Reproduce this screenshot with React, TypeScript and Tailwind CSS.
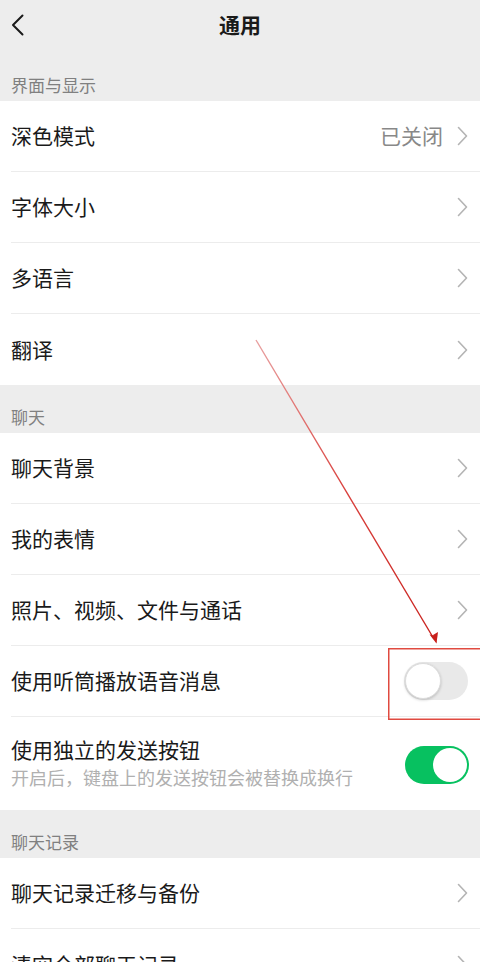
import React from "react";

const FONT = { fontFamily: '"Noto Sans CJK SC", "Noto Sans", sans-serif' };

function Chevron() {
  return (
    <svg width="11" height="20" viewBox="0 0 11 20" className="shrink-0">
      <path d="M1.5 1.5 L9.5 10 L1.5 18.5" fill="none" stroke="#b4b4b4" strokeWidth="1.6" strokeLinecap="round" strokeLinejoin="round" />
    </svg>
  );
}

function Toggle({ on }: { on: boolean }) {
  return on ? (
    <div className="w-[64px] h-[38px] rounded-full bg-[#07c160] flex items-center justify-end p-[2px] shrink-0">
      <div className="w-[34px] h-[34px] rounded-full bg-white" />
    </div>
  ) : (
    <div className="w-[64px] h-[38px] rounded-full bg-[#e9e9e9] flex items-center justify-start p-[1px] shrink-0">
      <div className="w-[36px] h-[36px] rounded-full bg-white border border-[#dcdcdc] shadow-[0_1px_3px_rgba(0,0,0,0.2)]" />
    </div>
  );
}

function Section({ label, h }: { label: string; h: string }) {
  return (
    <div className={`${h} bg-[#ededed] flex items-end pl-[11px] pb-[4px]`}>
      <span className="text-[17px] leading-[24px] text-[#808080]">{label}</span>
    </div>
  );
}

function Row({
  title,
  value,
  last,
  right,
}: {
  title: string;
  value?: string;
  last?: boolean;
  right?: React.ReactNode;
}) {
  return (
    <div className="bg-white pl-[11px]">
      <div className={`h-[71px] flex items-center pr-[12px] ${last ? "" : "border-b border-[#ececec]"}`}>
        <span className="flex-1 text-[21px] text-[#1a1a1a]">{title}</span>
        {value && <span className="text-[21px] text-[#888888] mr-[14px]">{value}</span>}
        {right ?? <Chevron />}
      </div>
    </div>
  );
}

export default function App() {
  return (
    <div className="relative w-[480px] h-[962px] overflow-hidden bg-[#ededed]" style={FONT}>
      {/* Header */}
      <div className="h-[50px] relative flex items-center justify-center">
        <div className="absolute left-[11px] top-[14px]">
          <svg width="14" height="22" viewBox="0 0 14 22">
            <path d="M11.5 1.5 L2 11 L11.5 20.5" fill="none" stroke="#1a1a1a" strokeWidth="2" strokeLinecap="round" strokeLinejoin="round" />
          </svg>
        </div>
        <span className="text-[21px] font-semibold text-[#1a1a1a]">通用</span>
      </div>

      <Section label="界面与显示" h="h-[51px]" />
      <Row title="深色模式" value="已关闭" />
      <Row title="字体大小" />
      <Row title="多语言" />
      <Row title="翻译" last />

      <Section label="聊天" h="h-[48px]" />
      <Row title="聊天背景" />
      <Row title="我的表情" />
      <Row title="照片、视频、文件与通话" />
      <Row title="使用听筒播放语音消息" right={<Toggle on={false} />} />
      <div className="bg-white pl-[11px]">
        <div className="h-[93px] flex items-center pr-[11px]">
          <div className="flex-1 flex flex-col pb-[4px]">
            <span className="text-[21px] leading-[30px] text-[#1a1a1a]">使用独立的发送按钮</span>
            <span className="text-[18px] leading-[26px] text-[#b0b0b0]">开启后，键盘上的发送按钮会被替换成换行</span>
          </div>
          <div className="mt-[2px]">
            <Toggle on />
          </div>
        </div>
      </div>

      <Section label="聊天记录" h="h-[48px]" />
      <Row title="聊天记录迁移与备份" />
      <Row title="清空全部聊天记录" last />

      {/* Annotation overlay */}
      <svg className="absolute inset-0 pointer-events-none" width="480" height="962" viewBox="0 0 480 962">
        <defs>
          <linearGradient id="ln" x1="256" y1="340" x2="436" y2="643" gradientUnits="userSpaceOnUse">
            <stop offset="0" stopColor="#e8a0a0" />
            <stop offset="0.5" stopColor="#d9403c" />
            <stop offset="1" stopColor="#c8201c" />
          </linearGradient>
        </defs>
        <line x1="256" y1="340" x2="434" y2="639" stroke="url(#ln)" strokeWidth="1.4" />
        <path d="M436.5 643.5 L429.5 634.5 L436 636 Z" fill="#c8201c" />
        <path d="M436.5 643.5 L438 632 L433 635 Z" fill="#c8201c" />
        <rect x="388.75" y="648.75" width="92" height="70.5" fill="none" stroke="#e04a40" strokeWidth="1.5" />
      </svg>
    </div>
  );
}
